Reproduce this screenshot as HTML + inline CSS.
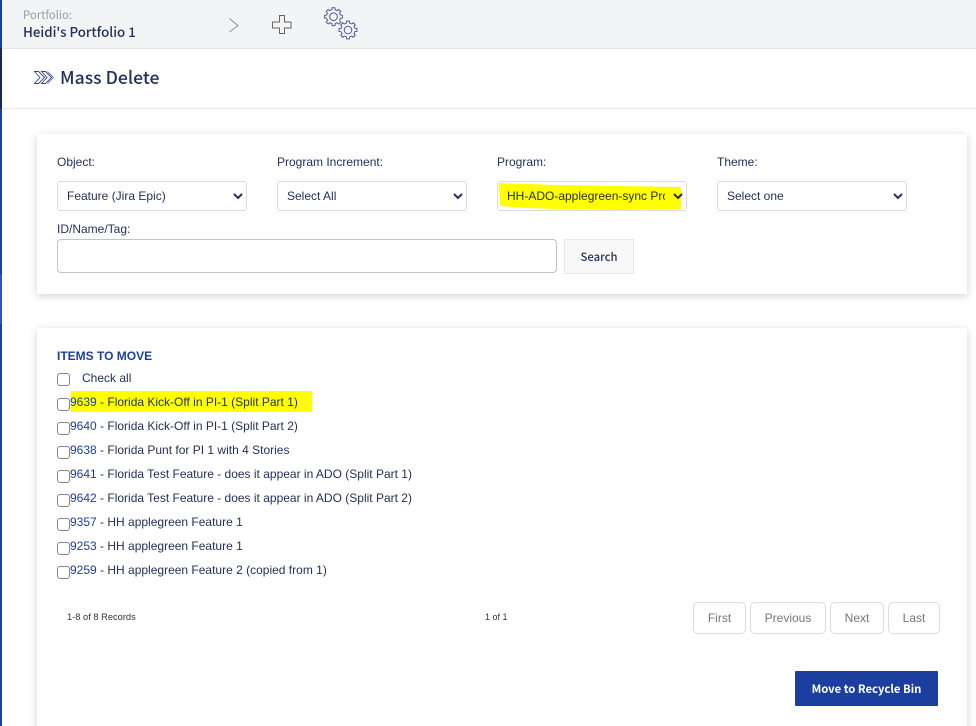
<!DOCTYPE html>
<html><head><meta charset="utf-8"><title>Mass Delete</title>
<style>
html,body{margin:0;padding:0;width:976px;height:726px;overflow:hidden;background:#fff}
body{font-family:"Liberation Sans",sans-serif;font-size:12px;color:#25305a;position:relative}
.a{position:absolute;white-space:nowrap}
.seg{font-family:"Noto Sans CJK SC","Liberation Sans",sans-serif}
.card{position:absolute;left:37px;width:930px;background:#fff;box-shadow:0 2px 8px rgba(0,0,0,.18)}
select{position:absolute;top:181px;width:190px;height:30px;box-sizing:border-box;border:1px solid #ddd;border-radius:3px;background:#fff;font:12px "Liberation Sans",sans-serif;color:#25305a;padding:0 5px;margin:0}
.lb{top:155px;line-height:14px}
input[type=checkbox]{appearance:none;-webkit-appearance:none;position:absolute;left:57px;width:13px;height:13px;margin:0;box-sizing:border-box;border:1px solid #858585;border-radius:3px;background:#fff}
.it{left:70px;line-height:14px}
.it b{font-weight:normal;color:#1c3f9f}
.pg{position:absolute;top:602px;height:32px;box-sizing:border-box;border:1px solid #ddd;border-radius:5px;color:#777;text-align:center;line-height:30px;background:#fff}
</style></head><body>
<div class="a" style="left:0;top:0;width:976px;height:48px;background:#f3f4f6"></div>
<div class="a" style="left:0;top:48px;width:976px;height:1px;background:#e4e5e7"></div>
<div class="a" style="left:0;top:108px;width:976px;height:1px;background:#e8e8e8"></div>
<div class="a" style="left:0;top:0;width:2px;height:726px;background:#1c3f9f"></div>
<div class="a" style="left:0;top:48px;width:2px;height:60px;background:#16294f"></div>
<div class="a" style="left:0;top:274px;width:2px;height:50px;background:#2c55bd"></div>

<div class="a seg" style="left:23px;top:7px;font-size:11.3px;line-height:16px;color:#9a9ca3">Portfolio:</div>
<div class="a seg" style="left:23px;top:23px;font-size:13.3px;line-height:18px;font-weight:500;color:#25305a">Heidi's Portfolio 1</div>

<svg class="a" style="left:0;top:0" width="400" height="100" viewBox="0 0 400 100" fill="none">
<defs><path id="t" d="M6.79-1.69L8.89-1.41V1.41L6.79 1.69A7 7 0 0 1 6 3.61"/></defs>
<path d="M229.5 18.500L238 25.500L229.500 32" stroke="#8d8f9a"/>
<path d="M279.500 15.500h5v6.500h6.500v6h-6.500v5.500h-5v-5.500h-7v-6h7z" stroke="#6a6460"/>
<g stroke="#4f5a96" transform="translate(333.500 16.700)">
<use href="#t"/><use href="#t" transform="rotate(45)"/><use href="#t" transform="rotate(90)"/><use href="#t" transform="rotate(135)"/><use href="#t" transform="rotate(180)"/><use href="#t" transform="rotate(225)"/><use href="#t" transform="rotate(270)"/><use href="#t" transform="rotate(315)"/>
<circle r="3.800"/></g>
<g stroke="#4f5a96" transform="translate(348 30)">
<use href="#t"/><use href="#t" transform="rotate(45)"/><use href="#t" transform="rotate(90)"/><use href="#t" transform="rotate(135)"/><use href="#t" transform="rotate(180)"/><use href="#t" transform="rotate(225)"/><use href="#t" transform="rotate(270)"/><use href="#t" transform="rotate(315)"/>
<circle r="3.800"/></g>
<g stroke-width=".9">
<path d="M34.500 71.500h4l6 6l-6 6h-4l5.500-6z" stroke="#36427a"/>
<path d="M41.500 71.500h4l6 6l-6 6h-4l5.500-6z" stroke="#36427a"/>
<path d="M47.500 71.500l6 6l-6 6" stroke="#6a7ab0"/>
</g>
</svg>
<div class="a seg" style="left:60px;top:65px;font-size:17.600px;line-height:26px;font-weight:500;color:#25305a">Mass Delete</div>

<div class="card" style="top:134px;height:160px"></div>
<div class="card" style="top:328px;height:420px"></div>

<div class="a lb" style="left:57px">Object:</div>
<div class="a lb" style="left:277px">Program Increment:</div>
<div class="a lb" style="left:497px">Program:</div>
<div class="a lb" style="left:717px">Theme:</div>

<select style="left:57px"><option>Feature (Jira Epic)</option></select>
<select style="left:277px"><option>Select All</option></select>
<select style="left:497px"><option>HH-ADO-applegreen-sync Program</option></select>
<svg class="a" style="left:497px;top:181px;pointer-events:none;mix-blend-mode:multiply" width="190" height="30"><path d="M2 2L30 3L60 4L120 5L184 6V28L120 29L60 28L30 27L3 25z" fill="#ffff00"/></svg>
<select style="left:717px"><option>Select one</option></select>

<div class="a" style="left:57px;top:222px;line-height:14px">ID/Name/Tag:</div>
<input class="a" type="text" style="left:57px;top:239px;width:500px;height:34px;box-sizing:border-box;border:1px solid #c4c4c4;border-radius:4px;margin:0;background:#fff">
<div class="a seg" style="left:564px;top:239px;width:70px;height:35px;box-sizing:border-box;border:1px solid #e8e8e8;background:#f8f8f8;text-align:center;line-height:35px;font-weight:500;font-size:11.300px">Search</div>

<div class="a" style="left:57px;top:349px;line-height:14px;font-weight:bold;color:#1c3f9f">ITEMS TO MOVE</div>
<input type="checkbox" style="top:373px">
<div class="a" style="left:82px;top:371px;line-height:14px">Check all</div>

<div class="a" style="left:71px;top:391px;width:241px;height:21px;background:#ffff00"></div>
<input type="checkbox" style="top:398px"><div class="a it" style="top:395px"><b>9639</b> - Florida Kick-Off in PI-1 (Split Part 1)</div>
<input type="checkbox" style="top:422px"><div class="a it" style="top:419px"><b>9640</b> - Florida Kick-Off in PI-1 (Split Part 2)</div>
<input type="checkbox" style="top:446px"><div class="a it" style="top:443px"><b>9638</b> - Florida Punt for PI 1 with 4 Stories</div>
<input type="checkbox" style="top:470px"><div class="a it" style="top:467px"><b>9641</b> - Florida Test Feature - does it appear in ADO (Split Part 1)</div>
<input type="checkbox" style="top:494px"><div class="a it" style="top:491px"><b>9642</b> - Florida Test Feature - does it appear in ADO (Split Part 2)</div>
<input type="checkbox" style="top:518px"><div class="a it" style="top:515px"><b>9357</b> - HH applegreen Feature 1</div>
<input type="checkbox" style="top:542px"><div class="a it" style="top:539px"><b>9253</b> - HH applegreen Feature 1</div>
<input type="checkbox" style="top:566px"><div class="a it" style="top:563px"><b>9259</b> - HH applegreen Feature 2 (copied from 1)</div>

<div class="a" style="left:67px;top:611px;font-size:9.300px;line-height:12px;color:#333">1-8 of 8 Records</div>
<div class="a" style="left:485px;top:611px;font-size:9px;line-height:12px;color:#333">1 of 1</div>

<div class="pg" style="left:693px;width:53px">First</div>
<div class="pg" style="left:750px;width:76px">Previous</div>
<div class="pg" style="left:830px;width:54px">Next</div>
<div class="pg" style="left:888px;width:52px">Last</div>

<div class="a seg" style="left:795px;top:671px;width:143px;height:35px;background:#1c3f9f;border-radius:1px;color:#fff;text-align:center;line-height:37px;font-weight:700;font-size:11.300px">Move to Recycle Bin</div>
</body></html>
